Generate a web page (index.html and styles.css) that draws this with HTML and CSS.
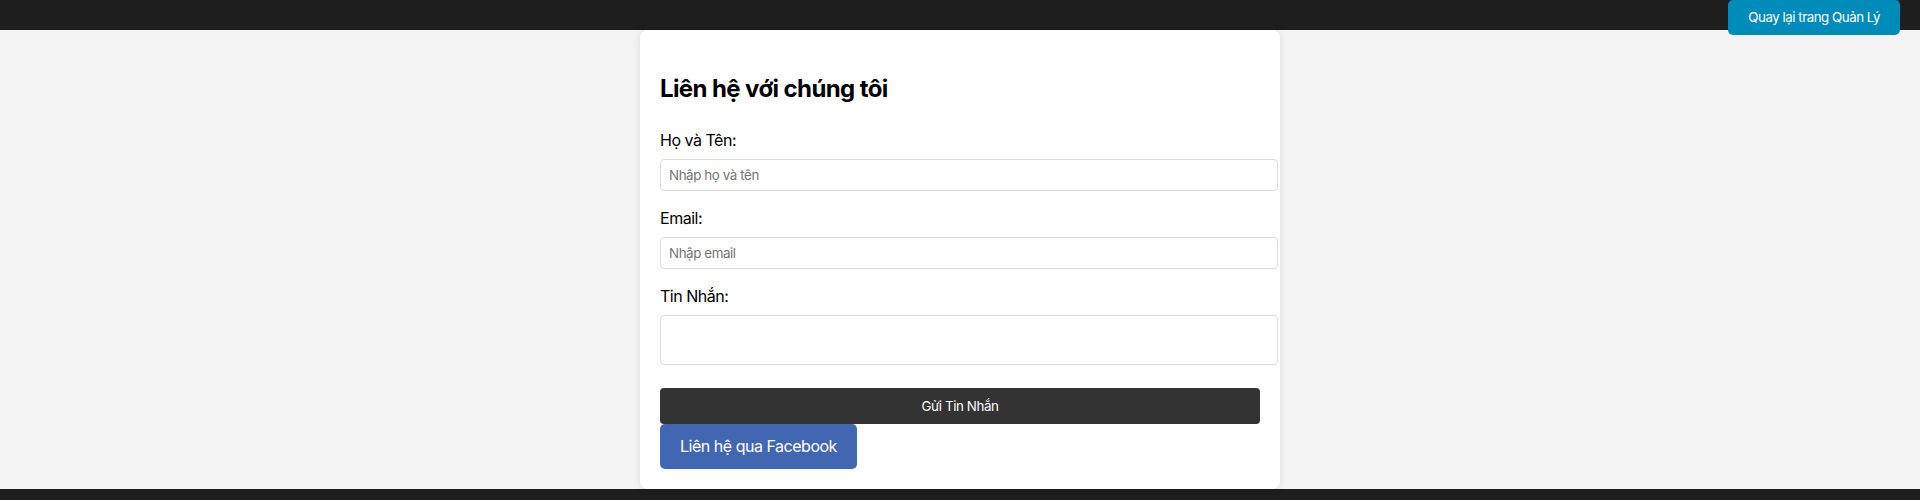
FILE: index.html
```html
<!DOCTYPE html>
<html lang="vi">
<head>
<meta charset="utf-8">
<title>Liên hệ</title>
<link rel="stylesheet" href="styles.css">
</head>
<body>
<header class="topbar"></header>
<a class="admin-btn" href="#">Quay lại trang Quản Lý</a>
<main class="page">
  <section class="card">
    <h2 class="title">Liên hệ với chúng tôi</h2>
    <form class="form">
      <label class="label" for="name">Họ và Tên:</label>
      <input class="field" id="name" type="text" placeholder="Nhập họ và tên">
      <label class="label" for="email">Email:</label>
      <input class="field" id="email" type="email" placeholder="Nhập email">
      <label class="label" for="msg">Tin Nhắn:</label>
      <textarea class="field area" id="msg"></textarea>
      <button class="submit" type="button">Gửi Tin Nhắn</button>
    </form>
    <div class="fb-row">
      <a class="fb-btn" href="#">Liên hệ qua Facebook</a>
    </div>
  </section>
</main>
<footer class="footer"></footer>
</body>
</html>
```

FILE: styles.css
```css
html, body {
  margin: 0;
  padding: 0;
}
body {
  background: #f4f4f4;
  font-family: Inter, "Noto Sans", sans-serif;
  color: #000;
  letter-spacing: -0.03em;
}
.topbar {
  height: 30px;
  background: #1e1e1e;
}
.admin-btn {
  position: fixed;
  top: 0;
  right: 20px;
  display: block;
  box-sizing: border-box;
  height: 35px;
  padding: 0 20px;
  line-height: 35px;
  background: #008cba;
  color: #fff;
  font-size: 13.33px;
  text-decoration: none;
  border-radius: 5px;
}
.page {
  display: flex;
  justify-content: center;
}
.card {
  width: 600px;
  padding: 20px;
  background: #fff;
  border-radius: 8px;
  box-shadow: 0 0 10px rgba(0, 0, 0, 0.1);
}
.title {
  margin: 24px 0 28px;
  font-size: 24px;
  line-height: 29px;
  font-weight: 700;
  letter-spacing: -0.025em;
}
.form {
  display: flex;
  flex-direction: column;
  align-items: flex-start;
}
.label {
  display: block;
  font-size: 16px;
  line-height: 19px;
  margin-bottom: 9px;
}
.field {
  display: block;
  width: 100%;
  height: 16px;
  padding: 7px 8px;
  margin: 0 0 18px;
  border: 1px solid #dcdcdc;
  border-radius: 4px;
  font-family: Inter, "Noto Sans", sans-serif;
  font-size: 13.33px;
  letter-spacing: -0.03em;
  line-height: 16px;
  color: #000;
  background: #fff;
  resize: none;
}
.field::placeholder {
  color: #757575;
}
.area {
  height: 32px;
  padding: 8px;
  margin-bottom: 23px;
}
.submit {
  width: 600px;
  height: 36px;
  border: none;
  border-radius: 4px;
  background: #333;
  color: #fff;
  font-family: Inter, "Noto Sans", sans-serif;
  font-size: 13.33px;
  letter-spacing: -0.03em;
  padding: 0;
}
.fb-row {
  display: flex;
}
.fb-btn {
  display: block;
  padding: 12px 20px;
  line-height: 21px;
  font-size: 16px;
  background: #4267b2;
  color: #fff;
  text-decoration: none;
  border-radius: 5px;
}
.footer {
  height: 40px;
  background: #1e1e1e;
}
```
